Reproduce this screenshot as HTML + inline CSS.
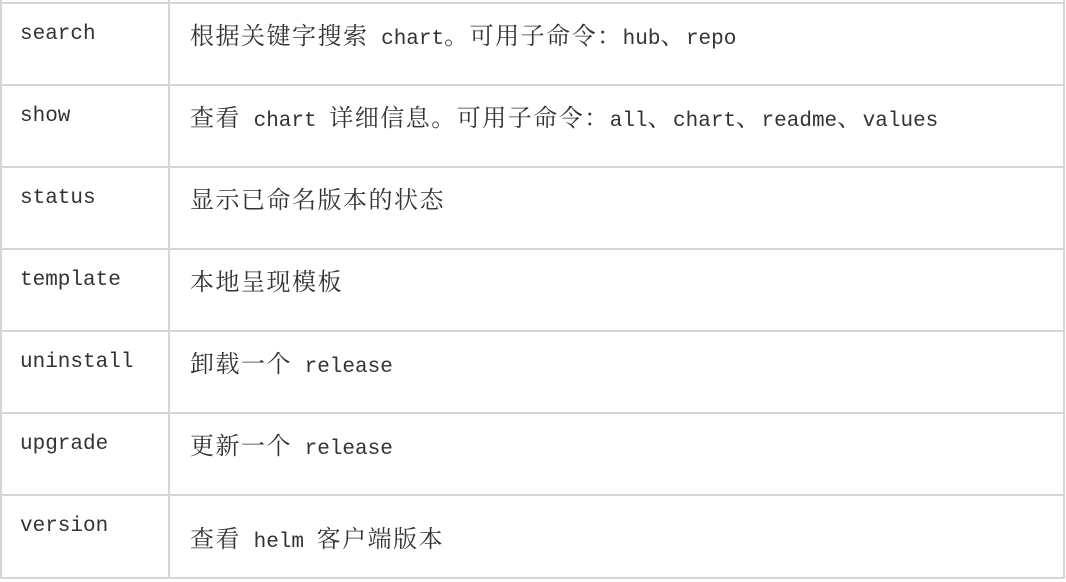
<!DOCTYPE html>
<html><head><meta charset="utf-8"><style>
body{margin:0;width:1066px;height:582px;background:#fff;overflow:hidden;position:relative;font-family:"Liberation Mono","Noto Serif CJK SC",monospace;font-size:21px;color:#333}
.h{position:absolute;left:0;width:1065px;height:2px;background:#d6d6d6}
.v{position:absolute;top:0;width:2px;height:579px;background:#d6d6d6}
.t{position:absolute;white-space:nowrap;line-height:26px}
.c{font-family:"Noto Serif CJK SC","Noto Sans CJK SC",serif;font-size:24px;letter-spacing:1.5px}
</style></head><body>
<div class="h" style="top:2px"></div>
<div class="h" style="top:84px"></div>
<div class="h" style="top:166px"></div>
<div class="h" style="top:248px"></div>
<div class="h" style="top:330px"></div>
<div class="h" style="top:412px"></div>
<div class="h" style="top:494px"></div>
<div class="h" style="top:577px"></div>
<div class="v" style="left:0"></div>
<div class="v" style="left:168px"></div>
<div class="v" style="left:1063px"></div>

<div class="t" style="left:20px;top:22px">search</div>
<div class="t" style="left:190px;top:21px"><span class="c">根据关键字搜索</span> chart<span class="c">。可用子命令：</span>hub<span class="c">、</span>repo</div>
<div class="t" style="left:20px;top:104px">show</div>
<div class="t" style="left:190px;top:103px"><span class="c">查看</span> chart <span class="c">详细信息。可用子命令：</span>all<span class="c">、</span>chart<span class="c">、</span>readme<span class="c">、</span>values</div>
<div class="t" style="left:20px;top:186px">status</div>
<div class="t" style="left:190px;top:185px"><span class="c">显示已命名版本的状态</span></div>
<div class="t" style="left:20px;top:268px">template</div>
<div class="t" style="left:190px;top:267px"><span class="c">本地呈现模板</span></div>
<div class="t" style="left:20px;top:350px">uninstall</div>
<div class="t" style="left:190px;top:349px"><span class="c">卸载一个</span> release</div>
<div class="t" style="left:20px;top:432px">upgrade</div>
<div class="t" style="left:190px;top:431px"><span class="c">更新一个</span> release</div>
<div class="t" style="left:20px;top:514px">version</div>
<div class="t" style="left:190px;top:524px"><span class="c">查看</span> helm <span class="c">客户端版本</span></div>
</body></html>
